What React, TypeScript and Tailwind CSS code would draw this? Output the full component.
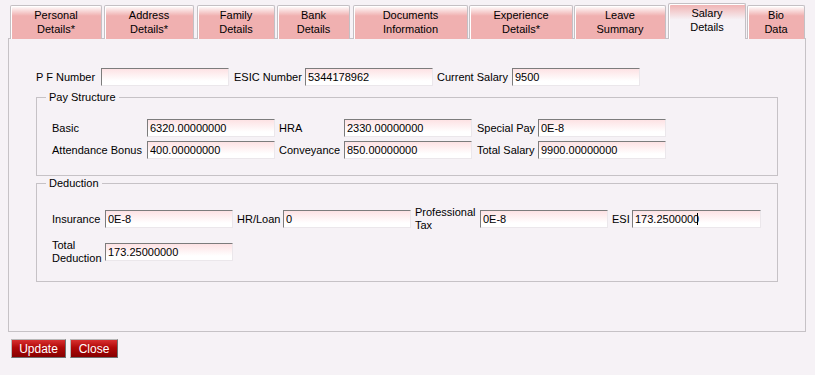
import React from 'react';

const tabs = [
  { top: 'Personal', bottom: 'Details*', w: 'w-[92px]', ml: 'ml-0' },
  { top: 'Address', bottom: 'Details*', w: 'w-[90px]', ml: 'ml-[2px]' },
  { top: 'Family', bottom: 'Details', w: 'w-[78px]', ml: 'ml-[3px]' },
  { top: 'Bank', bottom: 'Details', w: 'w-[73px]', ml: 'ml-[2px]' },
  { top: 'Documents', bottom: 'Information', w: 'w-[115px]', ml: 'ml-[3px]' },
  { top: 'Experience', bottom: 'Details*', w: 'w-[104px]', ml: 'ml-[1px]' },
  { top: 'Leave', bottom: 'Summary', w: 'w-[92px]', ml: 'ml-[1px]' },
  { top: 'Salary', bottom: 'Details', w: 'w-[78px]', ml: 'ml-[2px]', active: true },
  { top: 'Bio', bottom: 'Data', w: 'w-[58px]', ml: 'ml-[1px]' },
];

// sunken field with pink fade at the top
function Field({ value, w = 'w-[128px]' }: { value: string; w?: string }) {
  return (
    <input
      readOnly
      value={value}
      className={`${w} h-[18px] shrink-0 border border-t-[#7c7c7c] border-l-[#7c7c7c] border-r-[#ebe7eb] border-b-[#ebe7eb] bg-[linear-gradient(#fde2e4,#ffffff_75%)] px-[2px] text-[11px] text-black outline-none`}
    />
  );
}

function Label({ children, w, pl = 'pl-0' }: { children: React.ReactNode; w: string; pl?: string }) {
  return <div className={`${w} ${pl} shrink-0 text-[11px] leading-[13px] text-black`}>{children}</div>;
}

export default function App() {
  return (
    <div className="w-[815px] h-[375px] bg-[#f6f2f6] font-['Liberation_Sans',Arial,sans-serif] text-[11px] text-black overflow-hidden">
      {/* tab strip */}
      <div className="flex items-end h-[39px] pl-[10px]">
        {tabs.map((t) =>
          t.active ? (
            <div
              key={t.top}
              className={`${t.w} ${t.ml} relative z-10 h-[36px] flex flex-col items-center justify-center border border-b-0 border-[#c4c0c4] rounded-t-[2px] bg-[linear-gradient(#f0b0b0,#f6f2f6_45%)] shadow-[inset_1px_1px_0_#ffffff] leading-[14px] pb-[3px]`}
            >
              <span>{t.top}</span>
              <span>{t.bottom}</span>
            </div>
          ) : (
            <div
              key={t.top}
              className={`${t.w} ${t.ml} h-[34px] flex flex-col items-center justify-center border border-b-0 border-[#c4c0c4] rounded-t-[2px] bg-[linear-gradient(#ffffff,#f0b0b0_30%)] shadow-[inset_1px_1px_0_#ffffff] leading-[14px] pb-[2px]`}
            >
              <span>{t.top}</span>
              <span>{t.bottom}</span>
            </div>
          )
        )}
      </div>

      {/* tab panel */}
      <div className="ml-[8px] -mt-px w-[798px] h-[294px] border border-[#c6c2c6] pl-[27px] pt-[29px]">
        <div className="flex items-center h-[18px]">
          <Label w="w-[65px]">P F Number</Label>
          <Field value="" />
          <Label w="w-[76px]" pl="pl-[5px]">ESIC Number</Label>
          <Field value="5344178962" />
          <Label w="w-[79px]" pl="pl-[4px]">Current Salary</Label>
          <Field value="9500" />
        </div>

        <fieldset className="mt-[4px] w-[742px] border border-[#c6c2c6] pl-[15px] pt-[15px] pb-[16px]">
          <legend className="-ml-[6px] px-[3px] leading-[14px]">Pay Structure</legend>
          <div className="flex flex-col gap-[4px]">
            <div className="flex items-center h-[18px]">
              <Label w="w-[95px]">Basic</Label>
              <Field value="6320.00000000" />
              <Label w="w-[69px]" pl="pl-[4px]">HRA</Label>
              <Field value="2330.00000000" />
              <Label w="w-[66px]" pl="pl-[5px]">Special Pay</Label>
              <Field value="0E-8" />
            </div>
            <div className="flex items-center h-[18px]">
              <Label w="w-[95px]">Attendance Bonus</Label>
              <Field value="400.00000000" />
              <Label w="w-[69px]" pl="pl-[4px]">Conveyance</Label>
              <Field value="850.00000000" />
              <Label w="w-[66px]" pl="pl-[5px]">Total Salary</Label>
              <Field value="9900.00000000" />
            </div>
          </div>
        </fieldset>

        <fieldset className="w-[742px] border border-[#c6c2c6] pl-[15px] pt-[16px] pb-[16px]">
          <legend className="-ml-[6px] px-[3px] leading-[14px]">Deduction</legend>
          <div className="flex flex-col gap-[7px]">
            <div className="flex items-center h-[26px]">
              <Label w="w-[53px]">Insurance</Label>
              <Field value="0E-8" />
              <Label w="w-[50px]" pl="pl-[4px]">HR/Loan</Label>
              <Field value="0" />
              <Label w="w-[69px]" pl="pl-[4px]">
                Professional
                <br />
                Tax
              </Label>
              <Field value="0E-8" />
              <Label w="w-[24px]" pl="pl-[4px]">ESI</Label>
              <div className="relative">
                <Field value="173.2500000" w="w-[129px]" />
                <span className="absolute left-[65px] top-[3px] h-[12px] w-px bg-black" />
              </div>
            </div>
            <div className="flex items-center h-[26px]">
              <Label w="w-[53px]">
                Total
                <br />
                Deduction
              </Label>
              <Field value="173.25000000" />
            </div>
          </div>
        </fieldset>
      </div>

      {/* actions */}
      <div className="flex gap-[4px] pl-[11px] mt-[7px]">
        <button className="w-[55px] h-[19px] border border-t-[#b8b8b8] border-l-[#b8b8b8] border-r-[#707070] border-b-[#707070] bg-[linear-gradient(#d83030,#b00808_45%,#860000)] text-white text-[12px] leading-none">
          Update
        </button>
        <button className="w-[48px] h-[19px] border border-t-[#b8b8b8] border-l-[#b8b8b8] border-r-[#707070] border-b-[#707070] bg-[linear-gradient(#d83030,#b00808_45%,#860000)] text-white text-[12px] leading-none">
          Close
        </button>
      </div>
    </div>
  );
}
